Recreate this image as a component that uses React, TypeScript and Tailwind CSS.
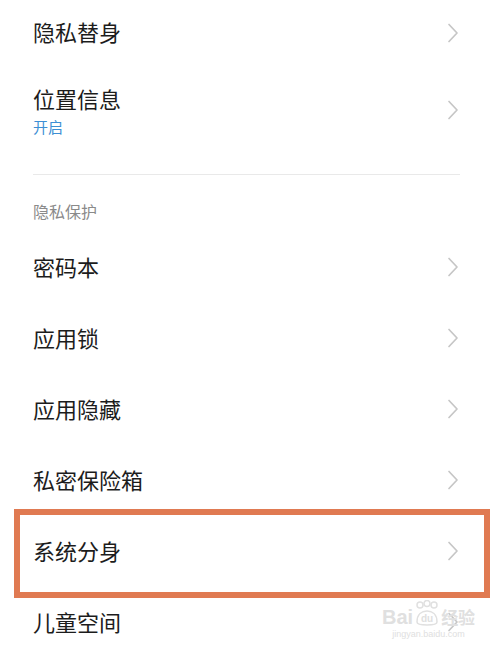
const CJK = { fontFamily: '"Noto Sans CJK SC", "Noto Sans", sans-serif' }

function Chevron() {
  return (
    <svg width="12" height="20" viewBox="0 0 12 20" className="shrink-0">
      <path d="M2 1.5 L10 10 L2 18.5" fill="none" stroke="#c6c6c6" strokeWidth="1.7" strokeLinecap="round" strokeLinejoin="round" />
    </svg>
  )
}

function Row({ title }: { title: string }) {
  return (
    <div className="flex h-[71px] items-center justify-between pl-[33px] pr-[41px]">
      <span className="pb-[2px] text-[22px] leading-[30px] text-[#1c1c1c]">{title}</span>
      <Chevron />
    </div>
  )
}

export default function App() {
  return (
    <div className="relative h-[659px] w-[500px] overflow-hidden bg-white" style={CJK}>

      <div className="flex h-[65px] items-center justify-between pl-[33px] pr-[41px]">
        <span className="pb-[3px] text-[22px] leading-[30px] text-[#1c1c1c]">隐私替身</span>
        <Chevron />
      </div>

      <div className="flex items-center justify-between pl-[33px] pr-[41px] pt-[18px]">
        <div className="flex flex-col">
          <span className="text-[22px] leading-[30px] text-[#1c1c1c]">位置信息</span>
          <span className="mt-[4px] text-[15px] leading-[20px] text-[#3d8fd4]">开启</span>
        </div>
        <Chevron />
      </div>

      <div className="ml-[33px] mr-[40px] mt-[37px] h-px bg-[#e9e9e9]" />

      <div className="mt-[25px] pl-[33px] text-[16px] leading-[22px] text-[#8a8a8a]">隐私保护</div>

      <div className="mt-[9px]">
        <Row title="密码本" />
        <Row title="应用锁" />
        <Row title="应用隐藏" />
        <Row title="私密保险箱" />
        <div className="relative">
          <Row title="系统分身" />
          <div className="absolute left-[14px] right-[10px] top-[-6px] bottom-[-12px] border-[6px] border-[#e07a52]" />
        </div>
        <Row title="儿童空间" />
      </div>

      <div className="absolute left-[382px] top-[600px] flex flex-col items-center text-[#e0e0e0]">
        <div className="flex items-end gap-[1px]">
          <span className="text-[20px] font-bold leading-[22px]" style={{ fontFamily: '"Liberation Sans", sans-serif' }}>Bai</span>
          <svg width="26" height="28" viewBox="0 0 26 28">
            <circle cx="6" cy="5" r="3" fill="none" stroke="#e0e0e0" strokeWidth="1.5" />
            <circle cx="13" cy="3.5" r="3" fill="none" stroke="#e0e0e0" strokeWidth="1.5" />
            <circle cx="20" cy="5" r="3" fill="none" stroke="#e0e0e0" strokeWidth="1.5" />
            <path d="M3 22 C3 14 8 11 13 11 C18 11 23 14 23 22 C23 26 3 26 3 22 Z" fill="none" stroke="#e0e0e0" strokeWidth="1.5" />
            <text x="13" y="22" textAnchor="middle" fontSize="10" fill="#e0e0e0" fontFamily="Liberation Sans, sans-serif" fontWeight="bold">du</text>
          </svg>
          <span className="text-[17px] font-bold leading-[22px]">经验</span>
        </div>
        <span className="text-[9px] leading-[12px]" style={{ fontFamily: '"Liberation Sans", sans-serif' }}>jingyan.baidu.com</span>
      </div>
    </div>
  )
}
